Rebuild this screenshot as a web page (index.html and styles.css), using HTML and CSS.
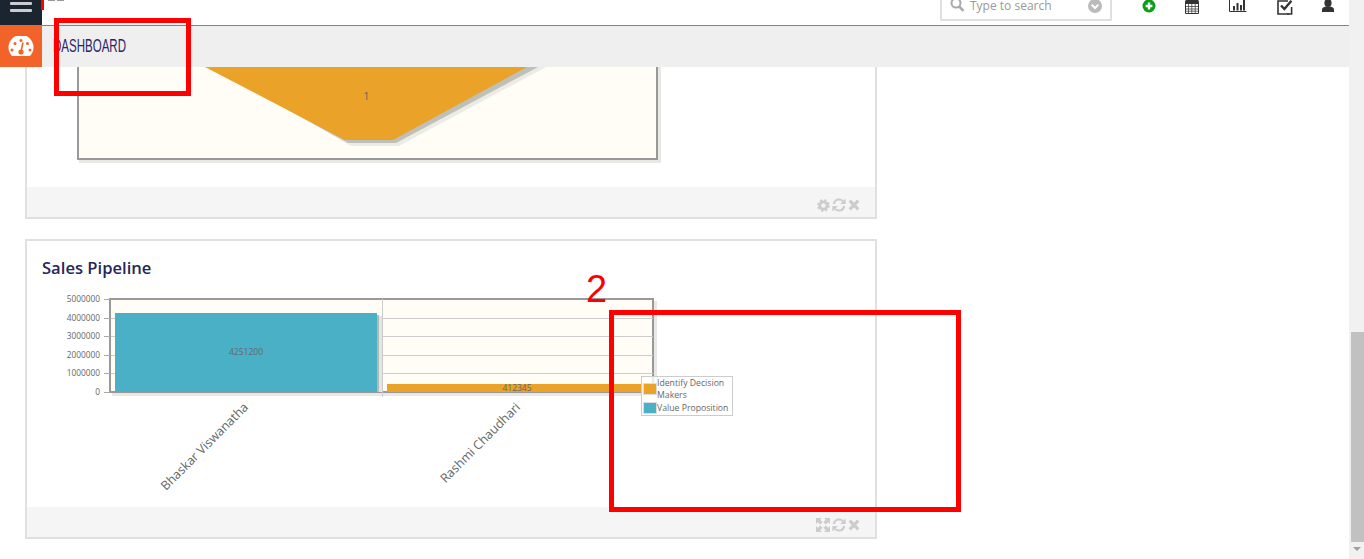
FILE: index.html
```html
<!DOCTYPE html>
<html lang="en">
  <head>
    <meta charset="UTF-8" />
    <meta name="viewport" content="width=device-width, initial-scale=1.0" />
    <title>Dashboard</title>
    <link rel="stylesheet" href="styles.css">
  </head>
  <body>
    <svg class="defs" width="0" height="0">
      <symbol id="ic-gear" viewBox="0 0 14 14">
        <circle cx="7" cy="7" r="4" fill="none" stroke="currentColor" stroke-width="3" />
        <circle cx="7" cy="7" r="5.800" fill="none" stroke="currentColor" stroke-width="2" stroke-dasharray="2.500 2.050" />
      </symbol>
      <symbol id="ic-refresh" viewBox="0 0 14 14">
        <path d="M1.800 6A5.300 5.300 0 0 1 11 3.200" fill="none" stroke="currentColor" stroke-width="2" />
        <path d="M13.600 .6V6H8.200Z" fill="currentColor" />
        <path d="M12.200 8A5.300 5.300 0 0 1 3 10.800" fill="none" stroke="currentColor" stroke-width="2" />
        <path d="M.4 13.400V8H5.800Z" fill="currentColor" />
      </symbol>
      <symbol id="ic-close" viewBox="0 0 14 14">
        <path d="M2 2L12 12M12 2L2 12" fill="none" stroke="currentColor" stroke-width="3.800" />
      </symbol>
      <symbol id="ic-expand" viewBox="0 0 14 14">
        <path d="M0 0H6L4.200 1.800 6.600 4.200 4.200 6.600 1.800 4.200 0 6ZM14 0V6L12.200 4.200 9.800 6.600 7.400 4.200 9.800 1.800 8 0ZM0 14V8L1.800 9.800 4.200 7.400 6.600 9.800 4.200 12.200 6 14ZM14 14H8L9.800 12.200 7.400 9.800 9.800 7.400 12.200 9.800 14 8Z" fill="currentColor" />
      </symbol>
    </svg>

    <div class="page">
      <div class="main">
        <header>
          <div class="topbar">
            <button class="menu-btn" aria-label="Menu">
              <span></span>
              <span></span>
            </button>
            <div class="crumbs"></div>
            <div class="search">
              <svg class="search-icon" width="15" height="13" viewBox="0 0 15 13">
                <circle cx="6" cy="4" r="4.500" fill="none" stroke="currentColor" stroke-width="2" />
                <path d="M9.200 7.500L13.500 11.800" stroke="currentColor" stroke-width="2.600" />
              </svg>
              <span class="search-text">Type to search</span>
              <svg class="search-arrow" width="14" height="14" viewBox="0 0 14 14">
                <circle cx="7" cy="7" r="7" fill="currentColor" />
                <path d="M3.600 5.600L7 9l3.400-3.400" fill="none" stroke="#fff" stroke-width="2" />
              </svg>
            </div>
            <div class="tools">
              <svg width="14" height="14" viewBox="0 0 14 14">
                <circle cx="7" cy="6" r="6.500" fill="#0a9e14" />
                <path d="M7 2.600V9.400M3.600 6H10.400" stroke="#fff" stroke-width="2.400" />
              </svg>
              <svg width="14" height="14" viewBox="0 0 14 14">
                <path d="M.5 1.500H13.500V13.500H.5Z" fill="#fff" stroke="#333" />
                <path d="M.5 0H13.500V4H.5Z" fill="#333" />
                <path d="M3.500 4V13M6.800 4V13M10.200 4V13M1 6.500H13M1 9H13M1 11.200H13" stroke="#444" stroke-width=".8" />
              </svg>
              <svg width="18" height="14" viewBox="0 0 18 14">
                <path d="M.5 0V11.500H17.500" fill="none" stroke="#333" />
                <path d="M4 6H6V10.500H4ZM7.500 3H9.500V10.500H7.500ZM11 5H13V10.500H11ZM14 0H16V10.500H14Z" fill="#333" />
              </svg>
              <svg width="16" height="15" viewBox="0 0 16 15">
                <path d="M12 14H1V1H11" fill="none" stroke="#333" stroke-width="1.600" />
                <path d="M14.600 7V14H10" fill="none" stroke="#333" stroke-width="1.600" />
                <path d="M4 5.500L7.400 9 14.400 .8" fill="none" stroke="#333" stroke-width="2.400" />
              </svg>
              <svg width="14" height="14" viewBox="0 0 14 14">
                <ellipse cx="7" cy="3" rx="3.600" ry="4" fill="#333" />
                <path d="M1 12V9.500C1 7.800 3 7 4.500 6.600H9.500C11 7 13 7.800 13 9.500V12Z" fill="#333" />
              </svg>
            </div>
          </div>
          <div class="subbar">
            <div class="gauge">
              <svg width="26" height="21" viewBox="0 0 26 21">
                <path d="M4 20A12.500 12.500 0 1 1 22 20Z" fill="#fff" />
                <circle cx="13" cy="16" r="2.600" fill="#f26329" />
                <path d="M13 15.500L15 6.500" stroke="#f26329" stroke-width="1.600" />
                <g fill="#f26329">
                  <circle cx="4" cy="14" r="1.500" />
                  <circle cx="7" cy="7.500" r="1.500" />
                  <circle cx="13" cy="4.500" r="1.500" />
                  <circle cx="22" cy="14" r="1.500" />
                  <circle cx="19.500" cy="7.500" r="1.500" />
                </g>
              </svg>
            </div>
            <h1>DASHBOARD</h1>
          </div>
        </header>

        <section class="content">
          <article class="card card-cut">
            <svg class="chart" width="848" height="120" viewBox="27 67 848 120">
              <rect x="79" y="67" width="582" height="96" fill="#e8e8e4" />
              <rect x="78" y="66" width="579" height="93" fill="#fffdf6" stroke="#999" stroke-width="2" />
              <polygon points="214,67 351,146 399,146 546,67" fill="#ecece6" />
              <polygon points="210,67 348,143 396,143 538,67" fill="#c0c0ba" />
              <polygon points="205,67 345,140 393,140 527,67" fill="#eaa228" />
              <text class="val val-big" x="366.500" y="100" text-anchor="middle">1</text>
            </svg>
            <div class="card-foot">
              <svg width="13" height="13"><use href="#ic-gear" /></svg>
              <svg width="14" height="14"><use href="#ic-refresh" /></svg>
              <svg width="12" height="12"><use href="#ic-close" /></svg>
            </div>
          </article>

          <article class="card">
            <h2>Sales Pipeline</h2>
            <svg class="chart" width="848" height="226" viewBox="27 281 848 226">
              <rect x="112" y="301" width="545" height="95" fill="#e8e8e4" />
              <rect x="110" y="299" width="543" height="93" fill="#fffdf6" stroke="#999" stroke-width="2" />
              <path class="grid" d="M111 318.500H653M111 336.500H653M111 355.500H653M111 373.500H653M382.500 299V397" />
              <path class="tick" d="M104 299.500H110M104 318.500H110M104 336.500H110M104 355.500H110M104 373.500H110M104 392.500H110" />
              <rect x="117" y="316" width="265" height="76" fill="#e4e4e0" />
              <rect x="117" y="315" width="262" height="77" fill="#b8b8b3" />
              <rect x="115" y="313" width="262" height="79" fill="#4ab0c6" />
              <rect x="387" y="384" width="266" height="8" fill="#eaa228" />
              <text class="val" x="246" y="355" text-anchor="middle">4251200</text>
              <text class="val" x="517" y="391" text-anchor="middle">412345</text>
              <g class="y-labels" text-anchor="end">
                <text x="100" y="302">5000000</text>
                <text x="100" y="321">4000000</text>
                <text x="100" y="339">3000000</text>
                <text x="100" y="358">2000000</text>
                <text x="100" y="376">1000000</text>
                <text x="100" y="395">0</text>
              </g>
              <text class="x-label" text-anchor="end" transform="translate(249 408) rotate(-45)">Bhaskar Viswanatha</text>
              <text class="x-label" text-anchor="end" transform="translate(521 408) rotate(-45)">Rashmi Chaudhari</text>
              <rect x="641.500" y="376.500" width="91" height="39" fill="#fff" fill-opacity=".8" stroke="#ccc" />
              <rect x="643.500" y="383.500" width="13" height="11" fill="#eaa228" stroke="#ddd" />
              <rect x="643.500" y="402.500" width="13" height="11" fill="#4ab0c6" stroke="#ddd" />
              <g class="legend">
                <text x="657" y="386">Identify Decision</text>
                <text x="657" y="398">Makers</text>
                <text x="657" y="411">Value Proposition</text>
              </g>
            </svg>
            <div class="card-foot">
              <svg width="14" height="14"><use href="#ic-expand" /></svg>
              <svg width="14" height="14"><use href="#ic-refresh" /></svg>
              <svg width="12" height="12"><use href="#ic-close" /></svg>
            </div>
          </article>
        </section>
      </div>

      <div class="scrollbar">
        <div class="thumb"></div>
        <div class="arrow"></div>
      </div>

      <!-- red marks drawn on top of the screenshot -->
      <div class="mark mark-tick"></div>
      <div class="mark mark-box1"></div>
      <div class="mark mark-box2"></div>
      <div class="mark mark-num">2</div>
    </div>
  </body>
</html>
```

FILE: styles.css
```css
* {
  box-sizing: border-box;
}

html,
body {
  margin: 0;
  height: 100%;
  overflow: hidden;
  background-color: white;
  font-family: "Open Sans", sans-serif;
}

.defs {
  position: absolute;
}

.page {
  position: relative;
  display: flex;
  width: 1364px;
  height: 559px;
  overflow: hidden;
}

.main {
  flex: 1;
  min-width: 0;
}

/* header */
.topbar {
  display: flex;
  height: 26px;
  border-bottom: 1px solid #e0603a;
}

.menu-btn {
  display: flex;
  flex-direction: column;
  gap: 4px;
  width: 42px;
  height: 25px;
  padding: 2px 10px 0;
  border: none;
  background-color: #1a2530;
}

.menu-btn span {
  display: block;
  width: 22px;
  height: 3px;
  border-radius: 1px;
  background-color: #c9cdd1;
}

.crumbs {
  width: 16px;
  height: 1px;
  margin-left: 6px;
  border-left: 7px solid #999;
  border-right: 7px solid #999;
}

.search {
  display: flex;
  align-items: center;
  width: 172px;
  height: 21px;
  margin-left: auto;
  padding: 0 8px 8px 8px;
  border: 2px solid #e0e0e0;
  border-top: none;
  color: #aaa;
}

.search-icon {
  flex: none;
}

.search-text {
  flex: 1;
  margin-left: 5px;
  font-size: 12px;
  line-height: 12px;
  color: #999;
}

.search-arrow {
  flex: none;
  color: #bbb;
}

.tools {
  display: flex;
  gap: 30px;
  align-items: flex-start;
  margin-left: 30px;
  padding-right: 14px;
}

.tools svg:nth-child(2) {
  margin-left: -1px;
}

.tools svg:last-child {
  margin-left: -2px;
}

.subbar {
  display: flex;
  align-items: center;
  height: 41px;
  background-color: #efefef;
}

.gauge {
  display: flex;
  align-items: center;
  justify-content: center;
  width: 42px;
  height: 42px;
  margin-top: -1px;
  background-color: #f26329;
}

/* no condensed font installed, so the heading is squeezed */
.subbar h1 {
  margin: 0 0 0 11px;
  font-family: "Liberation Sans", sans-serif;
  font-size: 18px;
  font-weight: normal;
  color: #2a2566;
  transform: scaleX(0.64);
  transform-origin: left center;
}

/* cards */
.content {
  padding-left: 25px;
}

.card {
  display: flex;
  flex-direction: column;
  width: 852px;
  margin-bottom: 20px;
  border: 2px solid #e0e0e0;
}

.card-cut {
  border-top: none;
}

.card h2 {
  margin: 0;
  padding: 14px 15px 0;
  font-size: 16.600px;
  font-weight: 600;
  line-height: 26px;
  color: #26265a;
}

.chart {
  display: block;
}

.card-foot {
  display: flex;
  gap: 2px;
  align-items: center;
  justify-content: flex-end;
  height: 30px;
  padding: 6px 15px 0 0;
  background-color: #f5f5f5;
  color: #ccc;
}

/* chart text */
.chart text {
  font-family: "Open Sans", sans-serif;
  fill: #666;
}

.chart .val {
  font-size: 8.500px;
}

.chart .val-big {
  font-size: 11px;
}

.y-labels text {
  font-size: 8.300px;
}

.chart .x-label {
  font-size: 12.500px;
}

.legend text {
  font-size: 8.700px;
}

.grid {
  fill: none;
  stroke: #ccc;
}

.tick {
  fill: none;
  stroke: #aaa;
}

/* scrollbar */
.scrollbar {
  flex: none;
  width: 15px;
  padding-top: 332px;
  background-color: #f1f1f1;
}

.thumb {
  height: 210px;
  margin-left: 2px;
  background-color: #c1c1c1;
}

.arrow {
  width: 0;
  margin: 5px auto 0;
  border-top: 4px solid #a0a0a0;
  border-left: 4px solid transparent;
  border-right: 4px solid transparent;
}

/* annotations */
.mark {
  position: absolute;
}

.mark-tick {
  left: 41px;
  top: 0;
  width: 4px;
  height: 10px;
  background-color: #f00;
  border-right: 1px solid #fff;
}

.mark-box1 {
  left: 54px;
  top: 18px;
  width: 137px;
  height: 78px;
  border: 5px solid #f00;
}

.mark-box2 {
  left: 609px;
  top: 310px;
  width: 352px;
  height: 202px;
  border: 5px solid #f00;
}

.mark-num {
  left: 586px;
  top: 267px;
  font-family: "Liberation Sans", sans-serif;
  font-size: 38px;
  line-height: 44px;
  color: #f00;
}
```
